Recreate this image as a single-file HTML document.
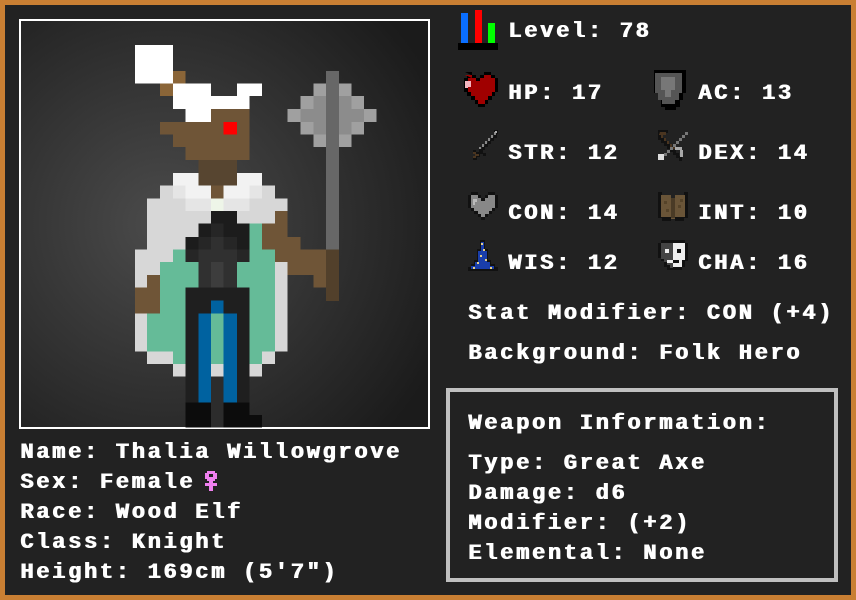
<!DOCTYPE html>
<html><head><meta charset="utf-8"><style>
*{margin:0;padding:0;box-sizing:border-box}
html,body{width:856px;height:600px;overflow:hidden;background:#c97f33}
#main{position:absolute;left:5px;top:5px;width:846px;height:590px;background:#222}
.t{position:absolute;font-family:"Liberation Mono",monospace;font-weight:bold;font-size:22px;letter-spacing:2.7px;color:#fff;white-space:pre;line-height:20px;text-shadow:1px 0 0 #fff}
#frame{position:absolute;left:19px;top:19px;width:411px;height:410px;border:2px solid #fff;background:radial-gradient(ellipse 75% 75% at 35% 50%,#4b4b4b 0%,#333 50%,#1b1b1b 100%)}
#wbox{position:absolute;left:446px;top:388px;width:392px;height:194px;border:4px solid #c0c0c0}
svg{position:absolute}
</style></head><body>
<div id="main"></div>
<div id="frame"></div>
<svg style="left:0;top:0" width="440" height="440" viewBox="0 0 1320 1320" shape-rendering="crispEdges">
<g fill="#fff"><rect x="405" y="135" width="114" height="116"/><rect x="519" y="251" width="114" height="76"/><rect x="633" y="288" width="116" height="39"/><rect x="711" y="251" width="75" height="37"/><rect x="557" y="327" width="76" height="39"/></g>
<g fill="#8a6538"><rect x="519" y="213" width="38" height="38"/><rect x="480" y="251" width="39" height="37"/></g>
<g fill="#6f5537"><rect x="633" y="327" width="116" height="39"/><rect x="480" y="366" width="269" height="38"/><rect x="519" y="404" width="230" height="37"/><rect x="557" y="441" width="192" height="39"/><rect x="633" y="557" width="38" height="38"/>
<rect x="825" y="633" width="38" height="38"/><rect x="786" y="671" width="77" height="40"/><rect x="786" y="711" width="116" height="38"/><rect x="825" y="749" width="153" height="37"/><rect x="863" y="786" width="115" height="39"/><rect x="940" y="825" width="38" height="38"/><rect x="441" y="825" width="39" height="38"/><rect x="405" y="863" width="75" height="77"/></g>
<rect x="671" y="366" width="40" height="38" fill="#f00"/>
<rect x="595" y="480" width="116" height="77" fill="#574530"/>
<g fill="#f2f2f2"><rect x="519" y="519" width="76" height="38"/><rect x="711" y="519" width="75" height="38"/><rect x="557" y="557" width="76" height="38"/><rect x="671" y="557" width="78" height="38"/></g>
<g fill="#e5e5e5"><rect x="519" y="557" width="38" height="38"/><rect x="749" y="557" width="37" height="38"/><rect x="557" y="595" width="76" height="38"/><rect x="671" y="595" width="78" height="38"/></g>
<rect x="633" y="595" width="38" height="38" fill="#eef5e8"/>
<g fill="#d7d7d7"><rect x="480" y="557" width="39" height="38"/><rect x="786" y="557" width="39" height="38"/><rect x="441" y="595" width="116" height="38"/><rect x="749" y="595" width="114" height="38"/><rect x="441" y="633" width="192" height="38"/><rect x="711" y="633" width="114" height="38"/><rect x="441" y="671" width="154" height="40"/><rect x="441" y="711" width="116" height="38"/><rect x="405" y="749" width="114" height="37"/><rect x="405" y="786" width="75" height="39"/><rect x="405" y="825" width="36" height="38"/><rect x="825" y="786" width="38" height="269"/><rect x="405" y="940" width="36" height="115"/><rect x="441" y="1055" width="78" height="37"/><rect x="786" y="1055" width="39" height="37"/><rect x="519" y="1092" width="38" height="38"/><rect x="633" y="1092" width="38" height="38"/><rect x="749" y="1092" width="37" height="38"/></g>
<g fill="#65bb98"><rect x="749" y="671" width="37" height="78"/><rect x="519" y="749" width="38" height="37"/><rect x="749" y="749" width="76" height="37"/><rect x="480" y="786" width="115" height="77"/><rect x="711" y="786" width="114" height="77"/><rect x="480" y="863" width="77" height="77"/><rect x="749" y="863" width="76" height="192"/><rect x="441" y="940" width="116" height="115"/><rect x="633" y="940" width="38" height="152"/><rect x="519" y="1055" width="38" height="37"/><rect x="749" y="1055" width="37" height="37"/></g>
<g fill="#1c1c1c"><rect x="633" y="633" width="78" height="38"/><rect x="595" y="671" width="38" height="40"/><rect x="671" y="671" width="78" height="40"/><rect x="557" y="711" width="38" height="38"/><rect x="711" y="711" width="38" height="38"/></g>
<g fill="#262626"><rect x="633" y="671" width="38" height="40"/><rect x="595" y="711" width="38" height="38"/><rect x="671" y="711" width="40" height="38"/><rect x="557" y="749" width="38" height="37"/><rect x="711" y="749" width="38" height="37"/></g>
<g fill="#303030"><rect x="633" y="711" width="38" height="38"/><rect x="595" y="749" width="116" height="37"/><rect x="595" y="786" width="116" height="77"/></g>
<rect x="633" y="786" width="38" height="77" fill="#3d3d3d"/>
<g fill="#1f1f1f"><rect x="557" y="863" width="192" height="77"/><rect x="557" y="940" width="38" height="268"/><rect x="711" y="940" width="38" height="268"/></g>
<g fill="#0062a0"><rect x="633" y="902" width="38" height="38"/><rect x="595" y="940" width="38" height="268"/><rect x="671" y="940" width="40" height="268"/></g>
<rect x="633" y="1130" width="38" height="153" fill="#2c2c2c"/>
<g fill="#0c0c0c"><rect x="557" y="1208" width="76" height="75"/><rect x="671" y="1208" width="78" height="75"/><rect x="749" y="1245" width="37" height="38"/></g>
<rect x="978" y="213" width="39" height="536" fill="#676767"/>
<rect x="978" y="749" width="39" height="154" fill="#52402b"/>
<g fill="#a0a0a0"><rect x="940" y="251" width="38" height="37"/><rect x="1017" y="251" width="38" height="37"/><rect x="902" y="288" width="38" height="39"/><rect x="1055" y="288" width="37" height="39"/><rect x="863" y="327" width="39" height="39"/><rect x="1092" y="327" width="38" height="39"/><rect x="902" y="366" width="38" height="38"/><rect x="1055" y="366" width="37" height="38"/><rect x="940" y="404" width="38" height="37"/><rect x="1017" y="404" width="38" height="37"/></g>
<g fill="#8c8c8c"><rect x="940" y="288" width="38" height="39"/><rect x="1017" y="288" width="38" height="39"/><rect x="902" y="327" width="76" height="39"/><rect x="1017" y="327" width="75" height="39"/><rect x="940" y="366" width="38" height="38"/><rect x="1017" y="366" width="38" height="38"/></g>
</svg>

<div class="t" style="left:20px;top:443px">Name: Thalia Willowgrove</div>
<div class="t" style="left:20px;top:473px">Sex: Female</div>
<svg style="left:204px;top:471px" width="14" height="20" shape-rendering="crispEdges"><path fill="#f080f0" d="M3 0h8v2h2v6h-2v2h-2v2h4v3h-4v5h-4v-5h-4v-3h4v-2h-2v-2h-2v-6h2zM5 3v3h4v-3z"/></svg>
<div class="t" style="left:20px;top:503px">Race: Wood Elf</div>
<div class="t" style="left:20px;top:533px">Class: Knight</div>
<div class="t" style="left:20px;top:563px">Height: 169cm (5'7")</div>

<svg style="left:458px;top:10px" width="40" height="40" shape-rendering="crispEdges"><rect x="3" y="3" width="7" height="30" fill="#0a6eff"/><rect x="17" y="0" width="7" height="33" fill="#f00"/><rect x="30" y="13" width="7" height="20" fill="#0f0"/><rect x="0" y="33" width="40" height="7" fill="#000"/></svg>
<div class="t" style="left:508px;top:22px">Level: 78</div>

<svg style="left:458px;top:72px" width="40" height="38" shape-rendering="crispEdges"><path fill="#000" d="M7 0h7v3h4v3h4v-3h4v-3h7v3h4v3h3v14h-3v4h-3v4h-4v4h-3v3h-7v-3h-3v-4h-4v-4h-4v-4h-3v-14h3v-3h4z"/><path fill="#a00000" d="M7 3h7v3h4v3h4v-3h4v-3h7v3h4v14h-3v4h-4v4h-3v4h-7v-4h-3v-4h-4v-4h-3v-14h4z"/><rect x="7" y="9" width="6" height="6" fill="#f4b6c0"/><rect x="7" y="13" width="3" height="3" fill="#f4b6c0"/></svg>
<div class="t" style="left:508px;top:84px">HP: 17</div>
<svg style="left:651px;top:70px" width="35" height="40" shape-rendering="crispEdges"><path fill="#000" d="M0 0h35v23h-3v7h-3v7h-4v3h-7h-4v-3h-4v-7h-3v-7h-4v-23z"/><path fill="#555" d="M4 3h27v20h-3v7h-4v4h-13v-4h-4v-7h-3z"/><rect x="10" y="7" width="14" height="13" fill="#777"/><rect x="14" y="20" width="6" height="7" fill="#777"/></svg>
<div class="t" style="left:698px;top:84px">AC: 13</div>

<svg style="left:468px;top:130px" width="31" height="31" shape-rendering="crispEdges"><path fill="#111" d="M26 0h4v4h-1v4h-3v3h-3v3h-3v3h-3v3h-2v3h3v3h-3v-2h-3v3h-3v3h-4v-4h3v-3h-3v-3h3v2h3v-3h3v-3h3v-3h3v-3h3v-3h3z"/><path fill="#888" d="M26 2h2v3h-3v3h-3v3h-3v3h-3v3h-3v2h-2v-2h3v-3h3v-3h3v-3h3v-3h3z"/><path fill="#aaa" d="M27 1h2v2h-2z"/><path fill="#4a3520" d="M5 22h3v2h3v2h-3v2h-3v-2h2v-2h-2z"/></svg>
<div class="t" style="left:508px;top:144px">STR: 12</div>
<svg style="left:658px;top:130px" width="31" height="31" shape-rendering="crispEdges"><path fill="#111" d="M0 0h10v3h-7v5h3v3h3v3h3v3h3v3h3v3h3v3h3v5h-3v-3h-3v-3h-3v-3h-3v-3h-3v-3h-3v-3h-3v-3h-3v-3h-3z"/><path fill="#4a3520" d="M2 2h6v3h-3v3h3v3h3v3h3v3h3v2h-2v-2h-3v-3h-3v-3h-3v-3h-3v-3h-2z"/><path fill="#777" d="M27 2h3v3h-3v3h-3v3h-3v3h-3v3h-3v3h-3v3h-3v3h-3v-3h3v-3h3v-3h3v-3h3v-3h3v-3h3v-3h3z"/><rect x="0" y="24" width="6" height="6" fill="#ddd"/><rect x="17" y="17" width="7" height="3" fill="#aaa"/><rect x="22" y="20" width="3" height="7" fill="#aaa"/></svg>
<div class="t" style="left:698px;top:144px">DEX: 14</div>

<svg style="left:468px;top:192px" width="30" height="28" shape-rendering="crispEdges"><path fill="#111" d="M3 0h7v3h3v3h4v-3h3v-3h7v3h3v13h-3v3h-3v3h-4v3h-3v3h-4v-3h-3v-3h-4v-3h-3v-3h-3v-13h3z"/><path fill="#888" d="M3 3h7v3h3v3h4v-3h3v-3h7v13h-3v3h-3v3h-4v3h-4v-3h-3v-3h-4v-3h-3z"/><rect x="5" y="7" width="4" height="3" fill="#bbb"/><rect x="5" y="10" width="2" height="3" fill="#bbb"/></svg>
<div class="t" style="left:508px;top:204px">CON: 14</div>
<svg style="left:658px;top:192px" width="30" height="29" shape-rendering="crispEdges"><path fill="#111" d="M0 0h4v3h9v3h4v-3h9v-3h4v26h-4v3h-9v-3h-4v3h-9v-3h-4z"/><path fill="#6a5538" d="M3 3h10v3h4v-3h10v22h-10v2h-4v-2h-10z"/><rect x="13" y="6" width="4" height="20" fill="#4a3b26"/><g fill="#554329"><rect x="6" y="9" width="3" height="3"/><rect x="20" y="13" width="3" height="3"/><rect x="8" y="17" width="3" height="3"/><rect x="22" y="7" width="3" height="3"/></g></svg>
<div class="t" style="left:698px;top:204px">INT: 10</div>

<svg style="left:468px;top:240px" width="30" height="31" shape-rendering="crispEdges"><path fill="#111" d="M12 0h5v9h3v11h3v4h4v3h3v4h-30v-4h3v-3h3v-4h3v-11h3z"/><path fill="#1a3eaa" d="M13 2h3v9h3v11h3v4h4v3h-23v-3h4v-4h3v-11h3z"/><g fill="#e5d08a"><rect x="13" y="3" width="2" height="2"/><rect x="15" y="9" width="2" height="2"/><rect x="12" y="15" width="2" height="2"/><rect x="17" y="19" width="2" height="2"/><rect x="5" y="27" width="2" height="2"/><rect x="22" y="27" width="2" height="2"/><rect x="9" y="22" width="2" height="2"/></g></svg>
<div class="t" style="left:508px;top:254px">WIS: 12</div>
<svg style="left:658px;top:240px" width="30" height="30" shape-rendering="crispEdges"><path fill="#111" d="M3 0h24v3h3v18h-3v6h-3v3h-15v-3h-3v-6h-3v-3h-3v-15h3z"/><path fill="#444" d="M3 3h12v25h-3v-3h-3v-3h-3v-3h-3z"/><path fill="#eee" d="M15 3h12v17h-3v7h-9z"/><rect x="7" y="9" width="4" height="4" fill="#eee"/><rect x="19" y="9" width="4" height="4" fill="#111"/><rect x="9" y="20" width="6" height="3" fill="#eee"/><rect x="15" y="20" width="6" height="3" fill="#111"/></svg>
<div class="t" style="left:698px;top:254px">CHA: 16</div>

<div class="t" style="left:468px;top:304px">Stat Modifier: CON (+4)</div>
<div class="t" style="left:468px;top:344px">Background: Folk Hero</div>

<div id="wbox"></div>
<div class="t" style="left:468px;top:414px">Weapon Information:</div>
<div class="t" style="left:468px;top:454px">Type: Great Axe</div>
<div class="t" style="left:468px;top:484px">Damage: d6</div>
<div class="t" style="left:468px;top:514px">Modifier: (+2)</div>
<div class="t" style="left:468px;top:544px">Elemental: None</div>
</body></html>
